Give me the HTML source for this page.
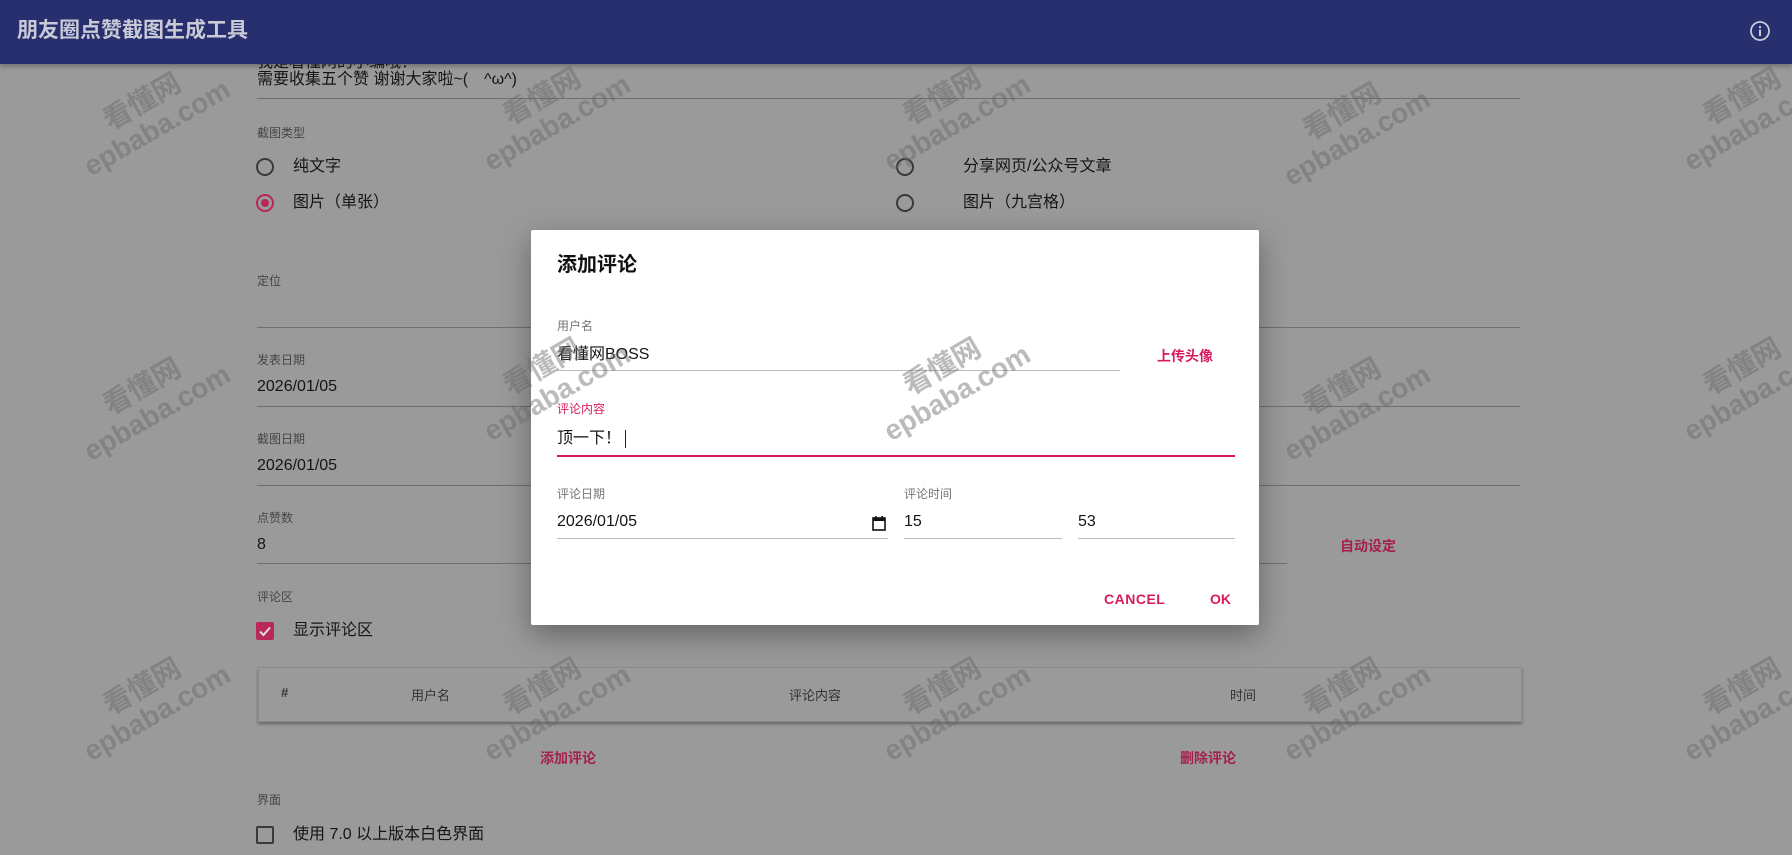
<!DOCTYPE html>
<html><head><meta charset="utf-8"><style>
*{margin:0;padding:0;box-sizing:border-box}
body{width:1792px;height:855px;overflow:hidden;background:#9a9a9a;position:relative;font-family:"Liberation Sans","Noto Sans CJK SC",sans-serif;color:#151515}
.a{position:absolute;white-space:nowrap}
.t{font-size:16px;height:22px;line-height:22px}
.l{font-size:12px;color:#454545;height:16px;line-height:16px}
.ln{position:absolute;height:1px;background:#6f6f6f}
.radio{position:absolute;width:18px;height:18px;border:2px solid #3a3a3a;border-radius:50%}
.pk{color:#a4204f;font-weight:bold;font-size:14px}
.wm{position:absolute;transform:rotate(-30deg);color:rgba(105,105,105,.45);font-weight:bold;font-size:28px;line-height:30px;text-align:center;z-index:5}
.dl{position:absolute;left:531px;top:230px;width:728px;height:395px;background:#fff;box-shadow:0 10px 30px rgba(0,0,0,.35);border-radius:2px;z-index:3}
.dl .l{color:#757575}
.dl .ln{background:#c9c9c9;height:2px}
.pp{color:#d81b60;font-weight:bold;font-size:14px}
</style></head><body>
<div class="a" style="left:0;top:0;width:1792px;height:64px;background:#272f6f;box-shadow:0 2px 5px rgba(0,0,0,.3)"></div>
<div class="a" style="left:17px;top:18px;font-size:21px;font-weight:bold;color:#c9cad6;line-height:26px">朋友圈点赞截图生成工具</div>
<svg class="a" style="left:1749px;top:20px" width="22" height="22" viewBox="0 0 22 22"><circle cx="11" cy="11" r="9" fill="none" stroke="#c9cad6" stroke-width="1.8"/><rect x="10" y="9.5" width="2" height="6.5" fill="#c9cad6"/><rect x="10" y="6" width="2" height="2" fill="#c9cad6"/></svg>

<div class="a t" style="left:257px;top:64px;height:8px;overflow:hidden"><span style="position:relative;top:-12px">我是看懂网的小编哦！</span></div>
<div class="a t" style="left:257px;top:69px">需要收集五个赞 谢谢大家啦~(　^ω^)</div>
<div class="ln" style="left:257px;top:98px;width:1263px"></div>
<div class="a l" style="left:257px;top:125px">截图类型</div>
<div class="radio" style="left:256px;top:158px"></div><div class="a t" style="left:293px;top:156px">纯文字</div>
<div class="radio" style="left:256px;top:194px;border-color:#b8285a"><div style="position:absolute;left:3px;top:3px;width:8px;height:8px;border-radius:50%;background:#b8285a"></div></div><div class="a t" style="left:293px;top:192px">图片（单张）</div>
<div class="radio" style="left:896px;top:158px"></div><div class="a t" style="left:963px;top:156px">分享网页/公众号文章</div>
<div class="radio" style="left:896px;top:194px"></div><div class="a t" style="left:963px;top:192px">图片（九宫格）</div>
<div class="a l" style="left:257px;top:273px">定位</div>
<div class="ln" style="left:257px;top:327px;width:1263px"></div>
<div class="a l" style="left:257px;top:352px">发表日期</div>
<div class="a t" style="left:257px;top:376px">2026/01/05</div>
<div class="ln" style="left:257px;top:406px;width:1263px"></div>
<div class="a l" style="left:257px;top:431px">截图日期</div>
<div class="a t" style="left:257px;top:455px">2026/01/05</div>
<div class="ln" style="left:257px;top:485px;width:1263px"></div>
<div class="a l" style="left:257px;top:510px">点赞数</div>
<div class="a t" style="left:257px;top:534px">8</div>
<div class="ln" style="left:257px;top:563px;width:1030px"></div>
<div class="a pk" style="left:1340px;top:536px">自动设定</div>
<div class="a l" style="left:257px;top:589px">评论区</div>
<div class="a" style="left:256px;top:622px;width:18px;height:18px;background:#b8285a;border-radius:2px"><svg width="18" height="18"><path d="M4 9.5l3.5 3.5L14 5.5" stroke="#ddd" stroke-width="2" fill="none"/></svg></div>
<div class="a t" style="left:293px;top:620px">显示评论区</div>
<div class="a" style="left:258px;top:667px;width:1264px;height:55px;border:1px solid #8c8c8c;box-shadow:0 2px 3px rgba(0,0,0,.35)"></div>
<div class="a" style="left:281px;top:685px;font-size:13px;color:#333;font-weight:bold">#</div>
<div class="a" style="left:411px;top:685px;font-size:13px;color:#333">用户名</div>
<div class="a" style="left:789px;top:685px;font-size:13px;color:#333">评论内容</div>
<div class="a" style="left:1230px;top:685px;font-size:13px;color:#333">时间</div>
<div class="a pk" style="left:540px;top:748px">添加评论</div>
<div class="a pk" style="left:1180px;top:748px">删除评论</div>
<div class="a l" style="left:257px;top:792px">界面</div>
<div class="a" style="left:256px;top:826px;width:18px;height:18px;border:2px solid #3a3a3a;border-radius:2px"></div>
<div class="a t" style="left:293px;top:824px">使用 7.0 以上版本白色界面</div>

<div class="dl">
<div class="a" style="left:26px;top:23px;font-size:20px;font-weight:bold;color:#111;line-height:24px">添加评论</div>
<div class="a l" style="left:26px;top:88px">用户名</div>
<div class="a t" style="left:26px;top:114px">看懂网BOSS</div>
<div class="ln" style="left:26px;top:140px;width:563px;height:1px;background:#bbb"></div>
<div class="a pp" style="left:626px;top:116px">上传头像</div>
<div class="a l" style="left:26px;top:171px;color:#d81b60">评论内容</div>
<div class="a t" style="left:26px;top:198px">顶一下！ <span style="display:inline-block;width:1px;height:18px;background:#222;vertical-align:middle"></span></div>
<div class="ln" style="left:26px;top:225px;width:678px;background:#d81b60"></div>
<div class="a l" style="left:26px;top:256px">评论日期</div>
<div class="a t" style="left:26px;top:281px">2026/01/05</div>
<svg class="a" style="left:341px;top:285px" width="14" height="16" viewBox="0 0 14 16"><rect x="1" y="3" width="12" height="12" fill="none" stroke="#111" stroke-width="1.6"/><rect x="1" y="3" width="12" height="3" fill="#111"/><rect x="3" y="1" width="1.6" height="3" fill="#111"/><rect x="9.4" y="1" width="1.6" height="3" fill="#111"/></svg>
<div class="ln" style="left:26px;top:308px;width:331px;height:1px;background:#bbb"></div>
<div class="a l" style="left:373px;top:256px">评论时间</div>
<div class="a t" style="left:373px;top:281px">15</div>
<div class="ln" style="left:373px;top:308px;width:158px;height:1px;background:#bbb"></div>
<div class="a t" style="left:547px;top:281px">53</div>
<div class="ln" style="left:547px;top:308px;width:157px;height:1px;background:#bbb"></div>
<div class="a pp" style="left:573px;top:361px;letter-spacing:.5px">CANCEL</div>
<div class="a pp" style="left:679px;top:361px">OK</div>
</div>

<div class="wm" style="left:68px;top:85px">看懂网<br>epbaba.com</div>
<div class="wm" style="left:468px;top:80px">看懂网<br>epbaba.com</div>
<div class="wm" style="left:868px;top:80px">看懂网<br>epbaba.com</div>
<div class="wm" style="left:1268px;top:95px">看懂网<br>epbaba.com</div>
<div class="wm" style="left:1668px;top:80px">看懂网<br>epbaba.com</div>
<div class="wm" style="left:68px;top:370px">看懂网<br>epbaba.com</div>
<div class="wm" style="left:468px;top:350px">看懂网<br>epbaba.com</div>
<div class="wm" style="left:868px;top:350px">看懂网<br>epbaba.com</div>
<div class="wm" style="left:1268px;top:370px">看懂网<br>epbaba.com</div>
<div class="wm" style="left:1668px;top:350px">看懂网<br>epbaba.com</div>
<div class="wm" style="left:68px;top:670px">看懂网<br>epbaba.com</div>
<div class="wm" style="left:468px;top:670px">看懂网<br>epbaba.com</div>
<div class="wm" style="left:868px;top:670px">看懂网<br>epbaba.com</div>
<div class="wm" style="left:1268px;top:670px">看懂网<br>epbaba.com</div>
<div class="wm" style="left:1668px;top:670px">看懂网<br>epbaba.com</div>
</body></html>
